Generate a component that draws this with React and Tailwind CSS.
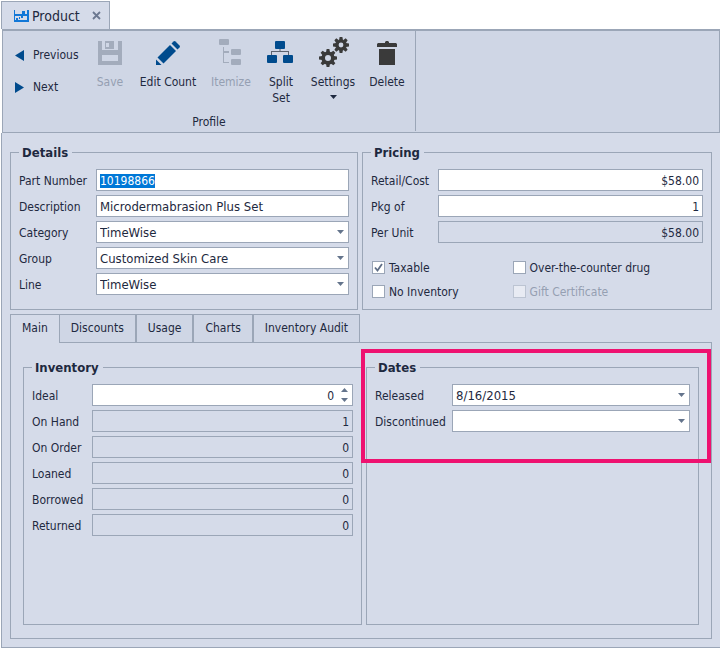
import React, { useEffect, useRef } from "react";

const TOOTH_ANGLES = [0, 45, 90, 135, 180, 225, 270, 315];

function Caret({ className = "fill-[#64748c]" }) {
    return (
        <svg viewBox="0 0 7 4" className={`w-[7px] h-1 ${className}`} aria-hidden="true">
            <path d="M0 0h7L3.5 4z" />
        </svg>
    );
}

function Gear({ cx, cy, r, hole }) {
    const body = r - 2.4;
    return (
        <g transform={`translate(${cx} ${cy})`}>
            <circle r={(body + hole) / 2} fill="none" stroke="#3a3a3a" strokeWidth={body - hole} />
            {TOOTH_ANGLES.map((angle) => (
                <path
                    key={angle}
                    d={`M-2 ${-body + 0.8}L-1.4 ${-r}H1.4L2 ${-body + 0.8}z`}
                    fill="#3a3a3a"
                    transform={`rotate(${angle})`}
                />
            ))}
        </g>
    );
}

function ToolIcon({ children, className = "" }) {
    return (
        <svg viewBox="0 0 32 32" className={`w-8 h-8 shrink-0 ${className}`} aria-hidden="true">
            {children}
        </svg>
    );
}

function ToolButton({ label, icon, width, disabled, menu }) {
    return (
        <button
            type="button"
            disabled={disabled}
            className={`${width} flex flex-col items-center disabled:text-[#959fb2]`}
        >
            {icon}
            <span className="mt-[5px] leading-4">{label}</span>
            {menu && <Caret className="mt-[5px] fill-[#1e2940]" />}
        </button>
    );
}

const saveIcon = (
    <ToolIcon className="fill-[#a3acbc]">
        <path fillRule="evenodd" d="M4 4h4v9h16V4h4v24H4zM8 18v6h16v-6z" />
        <path fillRule="evenodd" d="M11 4h9v8h-9zM12 6v4h3V6z" />
    </ToolIcon>
);

const editIcon = (
    <ToolIcon className="fill-[#004b8d]">
        <path d="M4 22.5L9.5 28H4z" />
        <path d="M5.5 20.5L18 8l6 6-12.500 12.500z" />
        <path d="M19.500 6.500L21.500 4.500Q22.500 3.700 23.500 4.500L27.500 8.500Q28.500 9.500 27.500 10.500L25.500 12.500z" />
    </ToolIcon>
);

const itemizeIcon = (
    <ToolIcon className="fill-[#a3acbc]">
        <rect x="4" y="2" width="10" height="6" rx="1" />
        <path d="M8 10h1v4h5v2H9v9h5v1H8z" />
        <rect x="16" y="12" width="10" height="6" rx="1" />
        <rect x="16" y="22" width="10" height="6" rx="1" />
    </ToolIcon>
);

const splitIcon = (
    <ToolIcon className="fill-[#004b8d]">
        <path d="M14.500 12h1v2H24v4h-1v-3H7v3H6v-4h8.500z" fill="#5b6370" />
        <rect x="10" y="4" width="10" height="8" rx="1" />
        <rect x="2" y="18" width="10" height="8" rx="1" />
        <rect x="18" y="18" width="10" height="8" rx="1" />
    </ToolIcon>
);

const settingsIcon = (
    <ToolIcon>
        <Gear cx={11} cy={21} r={9} hole={3} />
        <Gear cx={24} cy={8} r={8} hole={2.4} />
    </ToolIcon>
);

const deleteIcon = (
    <ToolIcon className="fill-[#3a3a3a]">
        <path d="M6 10V7l1-1h7V5l1-1h2l1 1v1h7l1 1v3z" />
        <path d="M8 12h16v16H8z" />
    </ToolIcon>
);

function Group({ title, className = "", children }) {
    return (
        <fieldset className={`min-w-0 border border-[#9ba6b7] px-2 pt-2 ${className}`}>
            <legend className="pl-[3px] pr-1 text-[13px] leading-[17px] font-bold">{title}</legend>
            {children}
        </fieldset>
    );
}

const labelClass = "pt-0.5";
const boxClass = "flex items-center h-[22px] min-w-0 border border-[#9ba6b7]";
const inputClass = "flex-1 min-w-0 h-full pt-px px-[3px] bg-transparent outline-none selection:bg-[#0078d7] selection:text-white";

function TextRow({ id, label, value, className = "", readOnly, inputRef }) {
    return (
        <>
            <label htmlFor={id} className={labelClass}>{label}</label>
            <div className={`${boxClass} ${readOnly ? "" : "bg-white"}`}>
                <input id={id} ref={inputRef} type="text" defaultValue={value} readOnly={readOnly} className={`${inputClass} ${className}`} />
            </div>
        </>
    );
}

function SelectRow({ id, label, value }) {
    return (
        <>
            <label htmlFor={id} className={labelClass}>{label}</label>
            <div className={`${boxClass} relative bg-white`}>
                <select id={id} defaultValue={value} className={`${inputClass} appearance-none text-[13px]`}>
                    <option>{value}</option>
                </select>
                <Caret className="absolute right-1 pointer-events-none fill-[#64748c]" />
            </div>
        </>
    );
}

function DateRow({ id, label, value }) {
    return (
        <>
            <label htmlFor={id} className={labelClass}>{label}</label>
            <div className={`${boxClass} bg-white`}>
                <input id={id} type="text" defaultValue={value} className={`${inputClass} text-[13px]`} />
                <button type="button" aria-label={`Pick ${label} date`} className="h-full px-1">
                    <Caret />
                </button>
            </div>
        </>
    );
}

function CheckRow({ label, checked, disabled }) {
    return (
        <label className={`flex items-center h-6 gap-1 ${disabled ? "text-[#959fb2]" : ""}`}>
            <span className="relative flex">
                <input
                    type="checkbox"
                    defaultChecked={checked}
                    disabled={disabled}
                    className="peer appearance-none w-[13px] h-[13px] border border-[#9ba6b7] bg-white disabled:bg-[#e8ebf3] disabled:border-[#bcc4d2]"
                />
                <svg viewBox="0 0 13 13" className="absolute inset-0 hidden peer-checked:block pointer-events-none" aria-hidden="true">
                    <path d="M3 6.500L5.500 9.500L10 3" fill="none" stroke="#5f6e86" strokeWidth="1.8" />
                </svg>
            </span>
            <span className={labelClass}>{label}</span>
        </label>
    );
}

const tabs = ["Discounts", "Usage", "Charts", "Inventory Audit"];

const counts = [
    { label: "On Hand", value: "1" },
    { label: "On Order", value: "0" },
    { label: "Loaned", value: "0" },
    { label: "Borrowed", value: "0" },
    { label: "Returned", value: "0" },
];

function App() {
    const partNumber = useRef(null);

    // Part number is selected when the product opens
    useEffect(() => {
        partNumber.current?.focus();
        partNumber.current?.select();
    }, []);

    return (
        <div className="min-h-screen flex flex-col bg-white pt-px pb-px pl-px pr-[2px] text-[12px] text-[#1e2940] font-['DejaVu_Sans_Condensed','DejaVu_Sans',sans-serif]">
            {/* Document tab */}
            <div className="flex">
                <div className="flex items-center h-7 pl-3 pr-2 border border-b-0 border-[#9ba6b7] bg-[#d5dbe9]">
                    <svg viewBox="0 0 15 12" className="w-[15px] h-3 mr-[3px] fill-[#1177d7]" aria-hidden="true">
                        <path d="M0 0h1v4h12V0h2v12H0zM1 6v4h12V6z" fillRule="evenodd" />
                        <path d="M8 1h3v3H8zM2 8h2v2H2zM5 7h1v2H5zM7 6h2v2H7z" />
                    </svg>
                    <span className="text-[14px] leading-4">Product</span>
                    <button type="button" aria-label="Close Product" className="ml-3">
                        <svg viewBox="0 0 9 9" className="w-[9px] h-[9px]" aria-hidden="true">
                            <path d="M1 1l7 7M8 1L1 8" stroke="#6b7890" strokeWidth="1.8" />
                        </svg>
                    </button>
                </div>
            </div>

            {/* Ribbon */}
            <div className="ml-px flex border border-t-2 border-[#9ba6b7] bg-[#cfd6e5] pb-px">
                <div className="flex flex-col border-r border-[#9ba6b7]">
                    <div className="flex pt-1.5 pr-px">
                        <div className="flex w-[87px] flex-col gap-4 pl-3 pt-[10px]">
                            <button type="button" className="flex items-center gap-[9px] leading-4">
                                <svg viewBox="0 0 9 11" className="w-[9px] h-[11px] fill-[#004b8d]" aria-hidden="true">
                                    <path d="M9 0v11L0 5.500z" />
                                </svg>
                                Previous
                            </button>
                            <button type="button" className="flex items-center gap-[9px] leading-4">
                                <svg viewBox="0 0 9 11" className="w-[9px] h-[11px] fill-[#004b8d]" aria-hidden="true">
                                    <path d="M0 0v11L9 5.500z" />
                                </svg>
                                Next
                            </button>
                        </div>
                        <ToolButton label="Save" icon={saveIcon} width="w-10" disabled />
                        <ToolButton label="Edit Count" icon={editIcon} width="w-[76px]" />
                        <ToolButton label="Itemize" icon={itemizeIcon} width="w-[50px]" disabled />
                        <ToolButton label={<>Split<br />Set</>} icon={splitIcon} width="w-[50px]" />
                        <ToolButton label="Settings" icon={settingsIcon} width="w-[54px]" menu />
                        <ToolButton label="Delete" icon={deleteIcon} width="w-[54px]" />
                    </div>
                    <div className="pt-2 pb-px text-center leading-4">Profile</div>
                </div>
            </div>

            {/* Product form */}
            <div className="flex-1 flex flex-col border-l border-b border-[#9ba6b7] bg-[#d5dbe9] px-2 pt-[11px] pb-2">
                <div className="grid grid-cols-[348fr_350fr] gap-1">
                    <Group title="Details" className="pb-3.5">
                        <div className="grid grid-cols-[77px_1fr] gap-y-1 items-center">
                            <TextRow id="part-number" label="Part Number" value="10198866" inputRef={partNumber} />
                            <TextRow id="description" label="Description" value="Microdermabrasion Plus Set" className="text-[13px]" />
                            <SelectRow id="category" label="Category" value="TimeWise" />
                            <SelectRow id="group" label="Group" value="Customized Skin Care" />
                            <SelectRow id="line" label="Line" value="TimeWise" />
                        </div>
                    </Group>

                    <Group title="Pricing">
                        <div className="grid grid-cols-[67px_1fr] gap-y-1 items-center">
                            <TextRow id="retail" label="Retail/Cost" value="$58.00" className="text-right" />
                            <TextRow id="pkg" label="Pkg of" value="1" className="text-right" />
                            <TextRow id="per-unit" label="Per Unit" value="$58.00" className="text-right" readOnly />
                        </div>
                        <div className="grid grid-cols-[141fr_191fr] mt-3 pl-px">
                            <CheckRow label="Taxable" checked />
                            <CheckRow label="Over-the-counter drug" />
                            <CheckRow label="No Inventory" />
                            <CheckRow label="Gift Certificate" disabled />
                        </div>
                    </Group>
                </div>

                {/* Tab strip */}
                <div className="mt-1 flex" role="tablist">
                    <button type="button" role="tab" aria-selected="true" className="h-7 px-[11px] pb-0.5 border-l border-t border-[#9ba6b7]">
                        Main
                    </button>
                    {tabs.map((tab) => (
                        <button
                            key={tab}
                            type="button"
                            role="tab"
                            aria-selected="false"
                            className="h-7 px-[11px] pb-0.5 border border-b-0 border-[#9ba6b7] bg-[#cfd6e5]"
                        >
                            {tab}
                        </button>
                    ))}
                </div>
                <div className="flex-1 flex flex-col border border-t-0 border-[#9ba6b7]">
                    {/* Top edge stays open under the active tab */}
                    <div className="ml-12 h-px bg-[#9ba6b7]" />
                    <div className="flex-1 grid grid-cols-[339fr_333fr] gap-1 px-3 pt-4 pb-[13px]">
                        <Group title="Inventory">
                            <div className="grid grid-cols-[60px_1fr] gap-y-1 items-center">
                                <label htmlFor="ideal" className={labelClass}>Ideal</label>
                                <div className={`${boxClass} bg-white`}>
                                    <input id="ideal" type="text" inputMode="numeric" defaultValue="0" className={`${inputClass} text-right`} />
                                    <div className="flex flex-col justify-between h-full py-[3px] px-1">
                                        <button type="button" aria-label="Increase ideal">
                                            <Caret className="rotate-180 fill-[#64748c]" />
                                        </button>
                                        <button type="button" aria-label="Decrease ideal">
                                            <Caret />
                                        </button>
                                    </div>
                                </div>
                                {counts.map((row) => (
                                    <TextRow
                                        key={row.label}
                                        id={row.label.toLowerCase().replace(" ", "-")}
                                        label={row.label}
                                        value={row.value}
                                        className="text-right"
                                        readOnly
                                    />
                                ))}
                            </div>
                        </Group>

                        <div className="relative flex flex-col">
                            <Group title="Dates" className="flex-1">
                                <div className="grid grid-cols-[77px_1fr] gap-y-1 items-center">
                                    <DateRow id="released" label="Released" value="8/16/2015" />
                                    <DateRow id="discontinued" label="Discontinued" value="" />
                                </div>
                            </Group>
                            {/* Callout drawn over the dates */}
                            <div className="absolute -left-[5px] -right-3 -top-[10px] h-[114px] border-4 border-[#ee1170] pointer-events-none" />
                        </div>
                    </div>
                </div>
            </div>
        </div>
    );
}

export default App;
